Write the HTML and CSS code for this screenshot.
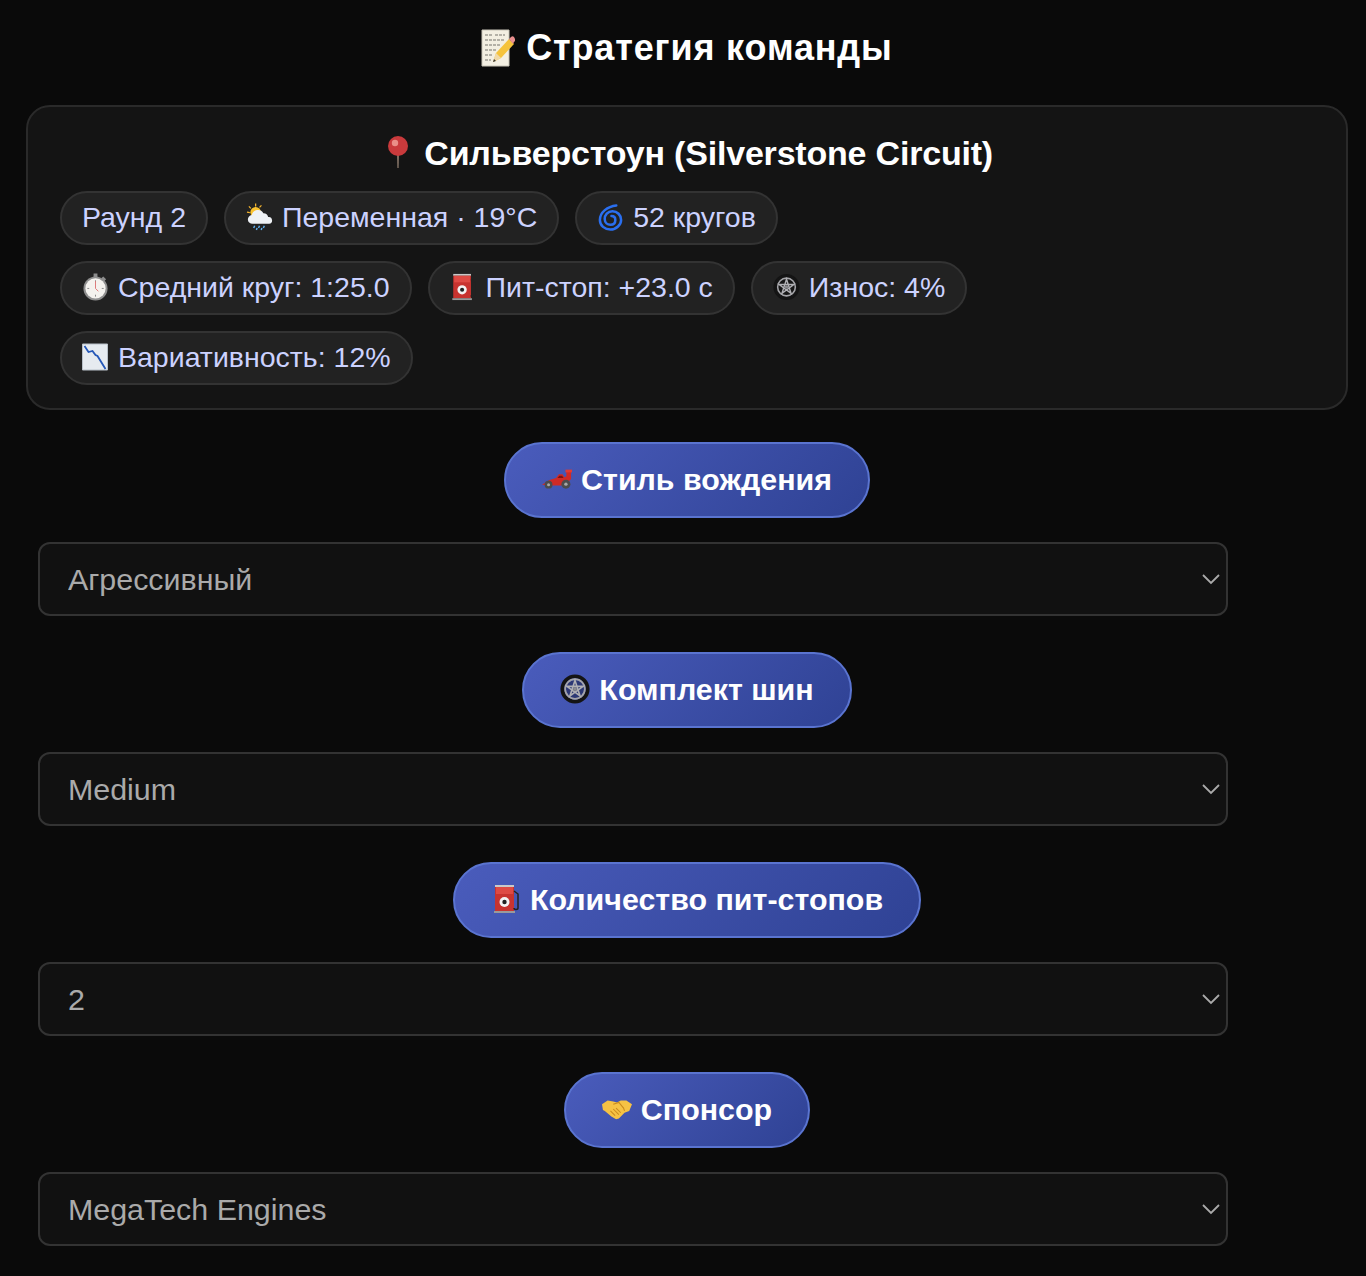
FILE: index.html
```html
<!DOCTYPE html>
<html lang="ru">
  <head>
    <meta charset="UTF-8" />
    <meta name="viewport" content="width=device-width, initial-scale=1.0" />
    <title>Стратегия команды</title>
    <link rel="stylesheet" href="styles.css">
  </head>
  <body>
    <svg class="icon-defs" aria-hidden="true">
      <symbol id="i-memo" viewBox="0 0 34 38">
        <path d="M1 1h27v36H1z" fill="#f3efe2" stroke="#c9c5b8"/>
        <path d="M4 6h8M14 6h10M4 11h20M4 16h16M4 21h11M4 26h8M4 31h6" stroke="#77746c" stroke-width="1.200" stroke-dasharray="3 1"/>
        <path d="M12 33l3-9L28 10l5 5-13 14z" fill="#f5c33b"/>
        <path d="M12 33l3-9 5 5z" fill="#f0d9a8"/>
        <path d="M12 33l1-3 2 2z" fill="#333"/>
        <path d="M28 10l2-2c1-1 2-1 3 0l1 2c1 1 0 2-1 3l-1 2z" fill="#e88f8f"/>
      </symbol>
      <symbol id="i-pin" viewBox="0 0 34 32">
        <path d="M16 16h2l-.4 16h-1.200z" fill="#8c7a6c"/>
        <circle cx="17" cy="10" r="10" fill="#c93a3c"/>
        <circle cx="14" cy="7" r="3.200" fill="#ea8f88"/>
      </symbol>
      <symbol id="i-rain" viewBox="0 0 28 28">
        <path d="M10 0v3M1 9l3 .5M3 3l2 2M16 2l-2 2" stroke="#f5b52e" stroke-width="1.300"/>
        <circle cx="10" cy="9" r="5.500" fill="#f9c22f"/>
        <path d="M7 21a4.500 4.500 0 0 1-1-9 6.500 6.500 0 0 1 12-2 5 5 0 0 1 5 4 3.500 3.500 0 0 1 1 7z" fill="#eef1f5"/>
        <path d="M9 23l-1 2.500M14 23l-1 2.500M19 23l-1 2.500M11.500 25.500l-.7 2M16.500 25.500l-.7 2" stroke="#5fb0f0" stroke-width="1.500"/>
      </symbol>
      <symbol id="i-spiral" viewBox="0 0 28 28">
        <path d="M20 2C11 3 3 9 3 17c0 6 5 10 11 10s11-5 11-10-4-9-9-9-8 4-8 8 3 6 6 6 5-2 5-5-2-4-4-4" fill="none" stroke="#2a6ff0" stroke-width="2.600" stroke-linecap="round"/>
      </symbol>
      <symbol id="i-watch" viewBox="0 0 28 28">
        <path d="M12 0h4v4h-4zM22 3l3 3-2 2-3-3z" fill="#8d8d8d"/>
        <circle cx="14" cy="15.500" r="12.500" fill="#8f8f8f"/>
        <circle cx="14" cy="15.500" r="10.500" fill="#f4f2ee"/>
        <path d="M14 7v2M14 22v2M5.500 15.500h2M20.500 15.500h2" stroke="#888"/>
        <path d="M14 15.500V8M14 15.500l3 3" stroke="#d77"/>
      </symbol>
      <symbol id="i-fuel" viewBox="0 0 28 30">
        <path d="M3 1h19v2H3z" fill="#c9c9c9"/>
        <path d="M3 3h19v24H3z" fill="#c8332f"/>
        <path d="M4 3h17v7H4z" fill="#de4a44"/>
        <path d="M2 27h21v2H2z" fill="#9a9a9a"/>
        <circle cx="12.500" cy="18" r="5" fill="#f3f3f3"/>
        <circle cx="12.500" cy="18" r="2.200" fill="#222"/>
        <path d="M22 7l4 3v14c0 2-4 2-4 0" fill="none" stroke="#222" stroke-width="1.500"/>
      </symbol>
      <symbol id="i-wheel" viewBox="0 0 28 28">
        <circle cx="14" cy="14" r="8.500" fill="#000" fill-opacity=".35"/>
        <circle cx="14" cy="14" r="11.800" fill="none" stroke="#141414" stroke-width="3.600"/>
        <circle cx="14" cy="14" r="9.200" fill="none" stroke="#a4a4a8" stroke-width="1.600"/>
        <path d="M14 6l4.700 14.500L6.400 11.500h15.200L9.300 20.500z" fill="none" stroke="#b0b0b4" stroke-width="1.500"/>
        <circle cx="14" cy="14" r="1.800" fill="#8c8c90"/>
      </symbol>
      <symbol id="i-chart" viewBox="0 0 26 28">
        <path d="M0 1h25v26H0z" fill="#e6ebf0"/>
        <path d="M0 1h25v26H0z" fill="none" stroke="#b8c0c8"/>
        <path d="M2 3l4 6 4-1 3 4 2 1 8 13" fill="none" stroke="#2457b8" stroke-width="1.800"/>
      </symbol>
      <symbol id="i-car" viewBox="0 0 32 22">
        <path d="M0 17l8-5 7-2 3-4h4l2 3 2-1V3h5v8l-2 2v5H7z" fill="#d02a26"/>
        <path d="M16.500 10l2-2.500h3l1.500 2.500z" fill="#7f1512"/>
        <path d="M25 1h7v3h-7z" fill="#e23a34"/>
        <circle cx="7" cy="17" r="4.200" fill="#4c4c4c"/>
        <circle cx="7" cy="17" r="1.600" fill="#a8a8a8"/>
        <circle cx="25.500" cy="16.500" r="4.800" fill="#4c4c4c"/>
        <circle cx="25.500" cy="16.500" r="1.800" fill="#a8a8a8"/>
      </symbol>
      <symbol id="i-hands" viewBox="0 0 32 24">
        <path d="M0 7l6-4 6 1 4 1 4-2 6 0 6 4-3 7-5 2-6 6-3 1-5-3-7-6-2-1z" fill="#f6c244"/>
        <path d="M12 7l6-2 5 6 1 3M9 14l5 5M12 12l6 6M15 11l5 5" fill="none" stroke="#c98a1e" stroke-width="1.100"/>
      </symbol>
    </svg>

    <div class="page">
      <h1 class="page-title"><svg class="title-icon"><use href="#i-memo"/></svg> Стратегия команды</h1>

      <div class="track-card">
        <h2 class="track-name"><svg class="pin-icon"><use href="#i-pin"/></svg> Сильверстоун (Silverstone Circuit)</h2>
        <div class="pills">
          <span class="pill">Раунд 2</span>
          <span class="pill"><svg class="pill-icon"><use href="#i-rain"/></svg>Переменная · 19°C</span>
          <span class="pill"><svg class="pill-icon"><use href="#i-spiral"/></svg>52 кругов</span>
        </div>
        <div class="pills">
          <span class="pill"><svg class="pill-icon"><use href="#i-watch"/></svg>Средний круг: 1:25.0</span>
          <span class="pill"><svg class="pill-icon"><use href="#i-fuel"/></svg>Пит-стоп: +23.0 с</span>
          <span class="pill"><svg class="pill-icon"><use href="#i-wheel"/></svg>Износ: 4%</span>
        </div>
        <div class="pills">
          <span class="pill"><svg class="pill-icon"><use href="#i-chart"/></svg>Вариативность: 12%</span>
        </div>
      </div>

      <div class="choice">
        <button class="choice-btn"><svg class="btn-icon"><use href="#i-car"/></svg>Стиль вождения</button>
        <div class="select-wrap">
          <select class="choice-select"><option>Агрессивный</option></select>
          <svg class="chevron" viewBox="0 0 18 12"><path d="M1 2l8 8 8-8" fill="none" stroke="#aaa" stroke-width="1.800"/></svg>
        </div>
      </div>

      <div class="choice">
        <button class="choice-btn"><svg class="btn-icon"><use href="#i-wheel"/></svg>Комплект шин</button>
        <div class="select-wrap">
          <select class="choice-select"><option>Medium</option></select>
          <svg class="chevron" viewBox="0 0 18 12"><path d="M1 2l8 8 8-8" fill="none" stroke="#aaa" stroke-width="1.800"/></svg>
        </div>
      </div>

      <div class="choice">
        <button class="choice-btn"><svg class="btn-icon"><use href="#i-fuel"/></svg>Количество пит-стопов</button>
        <div class="select-wrap">
          <select class="choice-select"><option>2</option></select>
          <svg class="chevron" viewBox="0 0 18 12"><path d="M1 2l8 8 8-8" fill="none" stroke="#aaa" stroke-width="1.800"/></svg>
        </div>
      </div>

      <div class="choice">
        <button class="choice-btn"><svg class="btn-icon"><use href="#i-hands"/></svg>Спонсор</button>
        <div class="select-wrap">
          <select class="choice-select"><option>MegaTech Engines</option></select>
          <svg class="chevron" viewBox="0 0 18 12"><path d="M1 2l8 8 8-8" fill="none" stroke="#aaa" stroke-width="1.800"/></svg>
        </div>
      </div>
    </div>
  </body>
</html>
```

FILE: styles.css
```css
body {
  font-family: "Liberation Sans", Arial, sans-serif;
  background: #0a0a0a;
  color: #fff;
  margin: 0;
}

.icon-defs {
  display: none;
}

.page {
  width: 1322px;
  margin-left: 26px;
  padding-bottom: 30px;
}

.page-title {
  font-size: 36px;
  letter-spacing: 0.85px;
  line-height: 40px;
  margin: 0;
  padding: 28px 0 37px;
  text-align: center;
}

.title-icon {
  width: 34px;
  height: 38px;
  vertical-align: -7px;
}

.track-card {
  background: #141414;
  border: 2px solid #2a2a2a;
  border-radius: 24px;
  padding: 26px 32px 24px;
  height: 305px;
  box-sizing: border-box;
}

.track-name {
  font-size: 34px;
  letter-spacing: -0.2px;
  line-height: 40px;
  margin: 0 0 18px;
  text-align: center;
}

.pin-icon {
  width: 34px;
  height: 32px;
  vertical-align: -3px;
}

.pills {
  display: flex;
  gap: 16px;
  margin-bottom: 16px;
}

.pill {
  display: inline-flex;
  align-items: center;
  gap: 9px;
  height: 54px;
  box-sizing: border-box;
  padding: 0 20px 2px;
  background: #222;
  border: 2px solid #333;
  border-radius: 27px;
  color: #ccd2ff;
  font-size: 28.5px;
}

.pill-icon {
  width: 27px;
  height: 28px;
}

.choice {
  margin-top: 32px;
}

.choice + .choice {
  margin-top: 36px;
}

.choice-btn {
  display: flex;
  align-items: center;
  gap: 9px;
  height: 76px;
  box-sizing: border-box;
  margin: 0 auto 24px;
  padding: 0 36px 2px;
  background: linear-gradient(135deg, #4a5cbc, #2f4294);
  border: 2px solid #5a74d0;
  border-radius: 38px;
  color: #fff;
  font-family: inherit;
  font-size: 30.4px;
  font-weight: bold;
  cursor: pointer;
}

.btn-icon {
  width: 30px;
  height: 30px;
}

.select-wrap {
  position: relative;
  width: 1190px;
  margin-left: 12px;
}

.choice-select {
  display: block;
  width: 100%;
  height: 74px;
  padding: 0 28px;
  appearance: none;
  background: #111;
  border: 2px solid #333;
  border-radius: 12px;
  color: #aaa;
  font-family: inherit;
  font-size: 30.4px;
}

.chevron {
  position: absolute;
  top: 31px;
  right: 8px;
  width: 18px;
  height: 12px;
  pointer-events: none;
}
```
